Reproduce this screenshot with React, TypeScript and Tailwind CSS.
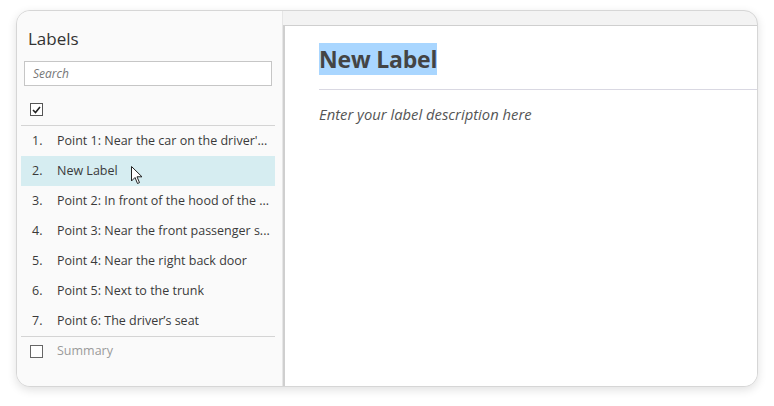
import React from 'react';

const items = [
  'Point 1: Near the car on the driver\'...',
  'New Label',
  'Point 2: In front of the hood of the ...',
  'Point 3: Near the front passenger s...',
  'Point 4: Near the right back door',
  'Point 5: Next to the trunk',
  'Point 6: The driver\u2019s seat',
];

const Cursor = () => (
  <svg className="absolute left-[131px] top-[166px]" width="12" height="19" viewBox="0 0 12 19">
    <path d="M0.5 0.5 L0.5 15 L4 11.5 L6.5 17.5 L8.5 16.6 L6 10.8 L11 10.8 Z" fill="#fff" stroke="#222" strokeWidth="1" strokeLinejoin="round" />
  </svg>
);

const App: React.FC = () => {
  return (
    <div className="w-[774px] h-[406px] bg-white pt-[10px] pl-[16px] relative" style={{ fontFamily: '"Open Sans", "Noto Sans", sans-serif' }}>
      <div className="w-[742px] h-[377px] rounded-[14px] border border-[#d6d6d6] shadow-[0_3px_10px_rgba(0,0,0,0.12)] overflow-hidden flex bg-[#f3f3f3]">
        {/* left panel */}
        <div className="w-[266px] shrink-0 bg-[#fafafa] border-r border-[#e6e6e6] flex flex-col px-[4px]">
          <div className="pl-[7px] pt-[15px] text-[17px] leading-[26px] text-[#333]">Labels</div>
          <div className="mx-[3px] mt-[9px] h-[25px] w-[248px] border border-[#c6c6c6] bg-white flex items-center px-[8px]">
            <span className="italic text-[12px] text-[#777]">Search</span>
          </div>
          <div className="pl-[9px] mt-[17px] h-[22px]">
            <div className="w-[13px] h-[13px] border border-[#555] bg-white flex items-center justify-center">
              <svg width="9" height="8" viewBox="0 0 9 8">
                <path d="M1 4 L3.5 6.5 L8 1" fill="none" stroke="#222" strokeWidth="1.6" />
              </svg>
            </div>
          </div>
          <div className="border-t border-[#d4d4d4] w-[254px]">
            {items.map((t, i) => (
              <div
                key={i}
                className={`h-[30px] flex items-center text-[12.5px] text-[#3a3a3a] ${i === 1 ? 'bg-[#d6edf1]' : ''}`}
              >
                <span className="w-[36px] pl-[11px] shrink-0">{i + 1}.</span>
                <span className="truncate">{t}</span>
              </div>
            ))}
          </div>
          <div className="border-t border-[#d4d4d4] w-[254px] h-[30px] flex items-center">
            <div className="ml-[9px] w-[13px] h-[13px] border border-[#666] bg-white" />
            <span className="ml-[14px] text-[12.5px] text-[#9a9a9a]">Summary</span>
          </div>
        </div>
        {/* right panel */}
        <div className="flex-1 pt-[14px] flex flex-col">
          <div className="flex-1 bg-white border-t border-l-2 border-[#cfcfcf] pl-[34px] pt-[17px]">
            <div className="inline-block bg-[#a9d6ff] text-[23px] font-bold leading-[32px] text-[#444] tracking-[-0.2px]">New Label</div>
            <div className="border-t border-[#d9d8e2] mt-[14px]" />
            <div className="mt-[14px] italic text-[14.8px] leading-[20px] text-[#555]">Enter your label description here</div>
          </div>
        </div>
      </div>
      <Cursor />
    </div>
  );
};

export default App;
